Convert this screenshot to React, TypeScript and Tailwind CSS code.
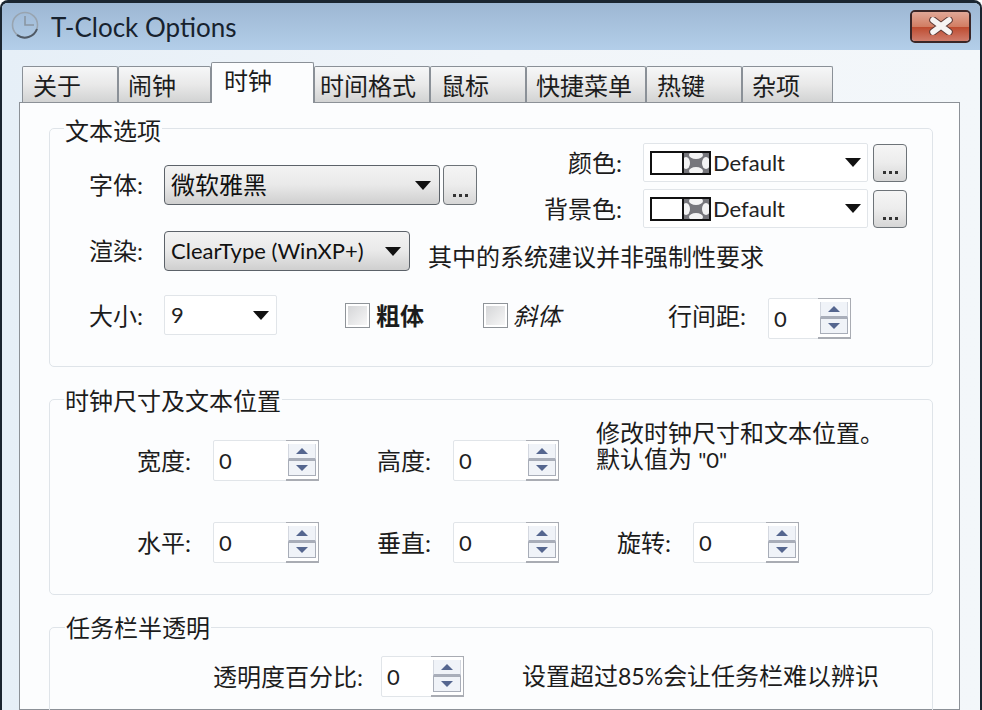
const base = "font-['Lato','Noto_Sans_CJK_SC',sans-serif]";

const tabs = [
  { label: '关于', width: 'w-[96px]', pad: 'pl-[10px]' },
  { label: '闹钟', width: 'w-[93px]', pad: 'pl-[9px]' },
  { label: '时钟', width: 'w-[103px]', pad: 'pl-[12px]', active: true },
  { label: '时间格式', width: 'w-[116px]', pad: 'pl-[5px]' },
  { label: '鼠标', width: 'w-[96px]', pad: 'pl-[10px]' },
  { label: '快捷菜单', width: 'w-[120px]', pad: 'pl-[9px]' },
  { label: '热键', width: 'w-[96px]', pad: 'pl-[10px]' },
  { label: '杂项', width: 'w-[91px]', pad: 'pl-[9px]' },
];

function Arrow({ className }: { className?: string }) {
  return (
    <svg width="16" height="9" viewBox="0 0 16 9" className={className}>
      <polygon points="0,0 16,0 8,9" fill="#111" />
    </svg>
  );
}

function ClockIcon() {
  return (
    <svg width="30" height="32" viewBox="0 0 30 32" className="shrink-0">
      <circle cx="15" cy="16" r="12.5" fill="none" stroke="#98a4b0" strokeWidth="1.6" />
      <path d="M7 26 A13 13 0 0 0 27 20" fill="none" stroke="#4f5a66" strokeWidth="2" />
      <path d="M15 7 V16 H24" fill="none" stroke="#8a96a2" strokeWidth="1.6" />
    </svg>
  );
}

function Swatch() {
  return (
    <svg width="61" height="24" viewBox="0 0 61 24" className="shrink-0">
      <rect x="1" y="1" width="59" height="22" fill="#fff" stroke="#111" strokeWidth="2" />
      <rect x="33" y="2" width="26" height="20" fill="#77777c" />
      <ellipse cx="46" cy="4" rx="7" ry="4" fill="#f4f4f4" />
      <ellipse cx="46" cy="20" rx="7" ry="4" fill="#f4f4f4" />
      <ellipse cx="36" cy="12" rx="4" ry="6" fill="#f4f4f4" />
      <ellipse cx="56" cy="12" rx="4" ry="6" fill="#f4f4f4" />
      <rect x="1" y="1" width="59" height="22" fill="none" stroke="#111" strokeWidth="2" />
      <path d="M33 0 V24" stroke="#111" strokeWidth="2" />
    </svg>
  );
}

function AeroSelect({ text, width, textSize }: { text: string; width: string; textSize: string }) {
  return (
    <div
      className={`${width} ${textSize} h-[40px] shrink-0 flex items-center justify-between pl-[6px] pr-[8px] rounded-[4px] border border-[#5c6269] bg-gradient-to-b from-[#f3f3f3] via-[#e9e9e9] to-[#cfcfcf] text-[#111] leading-none`}
    >
      <span className="whitespace-nowrap">{text}</span>
      <Arrow />
    </div>
  );
}

function PlainSelect({ children, width, className = '' }: { children: React.ReactNode; width: string; className?: string }) {
  return (
    <div
      className={`${width} h-[39px] shrink-0 flex items-center justify-between pl-[6px] pr-[6px] rounded-[2px] border border-[#e1e5e9] bg-white text-[#222] text-[22px] leading-none ${className}`}
    >
      {children}
    </div>
  );
}

function DotsButton({ className = '' }: { className?: string }) {
  return (
    <div
      className={`w-[34px] h-[38px] shrink-0 flex items-end justify-center pb-[7px] rounded-[4px] border border-[#6d7378] bg-gradient-to-b from-[#f5f5f5] via-[#ececec] to-[#d6d6d6] ${className}`}
    >
      <span className="flex gap-[3px]">
        <i className="w-[3px] h-[3px] bg-[#333]" />
        <i className="w-[3px] h-[3px] bg-[#333]" />
        <i className="w-[3px] h-[3px] bg-[#333]" />
      </span>
    </div>
  );
}

function SpinButton({ up }: { up?: boolean }) {
  return (
    <div
      className={`w-[28px] h-[16px] flex items-center justify-center bg-[#f0f3f8] ${up ? 'border-x border-x-[#d4d8e0] border-b-2 border-b-[#a9aeba]' : 'border border-[#a8adb8]'}`}
    >
      <svg width="12" height="6" viewBox="0 0 12 6">
        <polygon points={up ? '0,6 12,6 6,0' : '0,0 12,0 6,6'} fill="#55668f" />
      </svg>
    </div>
  );
}

function Spin({ width, className = '' }: { width: string; className?: string }) {
  return (
    <div className={`${width} h-[41px] shrink-0 flex justify-between rounded-[2px] border border-[#e1e5e9] bg-white ${className}`}>
      <span className="pl-[5px] self-center text-[22px] leading-none text-[#222]">0</span>
      <div className="w-[33px] flex flex-col justify-between py-[3px] pl-[2px] pr-[2px] border-r border-b-2 border-t border-[#a9acb3] -mr-[1px] -mt-[1px] -mb-[1px]">
        <SpinButton up />
        <SpinButton />
      </div>
    </div>
  );
}

function Check({ className = '' }: { className?: string }) {
  return (
    <div className={`w-[25px] h-[25px] shrink-0 border border-[#8f9499] bg-white p-[2px] ${className}`}>
      <div className="w-full h-full bg-gradient-to-br from-[#d5d6d8] to-[#f7f7f7]" />
    </div>
  );
}

function Group({ title, height, legend, children }: { title: string; height: string; legend: string; children: React.ReactNode }) {
  return (
    <div className={`relative ${height} shrink-0 rounded-[5px] border border-[#dfe4e9]`}>
      <span className={`absolute ${legend} px-[1px] bg-[#fcfdfe] text-[24px] leading-[32px] text-[#1c1c1c]`}>{title}</span>
      {children}
    </div>
  );
}

export default function App() {
  return (
    <div className={`${base} w-[982px] h-[710px] overflow-hidden flex flex-col bg-[#eef4f9] text-[24px] text-[#1c1c1c] border-x-[2px] border-t-[3px] border-[#1a2530] rounded-t-[8px]`}>
      {/* title bar */}
      <div className="h-[47px] shrink-0 flex items-start bg-gradient-to-b from-[#9db7d3] to-[#b3cee9] pl-[8px] pr-[9px]">
        <div className="mt-[6px]">
          <ClockIcon />
        </div>
        <span className="ml-[11px] mt-[6px] text-[#17222e] text-[26px] leading-[36px] whitespace-nowrap">T-Clock Options</span>
        <div className="ml-auto mt-[7px] w-[61px] h-[33px] rounded-[5px] border-2 border-[#3a2627] flex flex-col relative overflow-hidden">
          <div className="h-1/2 bg-gradient-to-b from-[#e0a796] to-[#d17c62]" />
          <div className="h-1/2 bg-gradient-to-b from-[#bd4a2e] to-[#cf7c6b]" />
          <svg width="26" height="18" viewBox="0 0 26 18" className="absolute left-[16px] top-[5px]">
            <path d="M5 3 L21 15 M21 3 L5 15" stroke="#5d3a36" strokeWidth="7.5" strokeLinecap="round" />
            <path d="M5 3 L21 15 M21 3 L5 15" stroke="#f7f4f3" strokeWidth="5.5" strokeLinecap="round" />
          </svg>
        </div>
      </div>

      {/* body */}
      <div className="flex-1 min-h-0 flex flex-col pl-[17px] pr-[20px] bg-gradient-to-r from-[#e6eff7] via-[#f1f5f9] to-[#f3f7fa]">
        {/* tabs */}
        <div className="h-[40px] mt-[12px] shrink-0 flex items-end pl-[3px] relative z-10">
          {tabs.map((tab) =>
            tab.active ? (
              <div
                key={tab.label}
                className={`${tab.width} ${tab.pad} h-[41px] -mb-[1px] shrink-0 border border-b-0 border-[#8a9097] rounded-t-[2px] bg-[#fcfdfe] text-[24px] leading-[36px]`}
              >
                {tab.label}
              </div>
            ) : (
              <div
                key={tab.label}
                className={`${tab.width} ${tab.pad} h-[36px] shrink-0 border border-b-0 border-[#8a9097] rounded-t-[2px] bg-gradient-to-b from-[#f6f7f8] via-[#e9e9e9] to-[#d2d3d3] text-[24px] leading-[38px] whitespace-nowrap`}
              >
                {tab.label}
              </div>
            ),
          )}
        </div>

        {/* panel */}
        <div className="flex-1 min-h-0 flex flex-col gap-[32px] border border-[#8c9197] bg-[#fcfdfe] pt-[25px] pl-[29px] pr-[26px]">
          <Group title="文本选项" height="h-[239px]" legend="left-[14px] -top-[14px]">
            <div className="flex pt-[14px]">
              <div className="flex items-start pt-[22px] pl-[39px]">
                <span className="w-[56px] leading-[40px] whitespace-nowrap">字体:</span>
                <AeroSelect text="微软雅黑" width="w-[276px] ml-[19px]" textSize="text-[24px]" />
                <DotsButton className="ml-[3px] h-[40px]" />
              </div>
              <div className="flex flex-col gap-[7px] ml-[67px]">
                <div className="flex items-center">
                  <span className="w-[78px] text-right whitespace-nowrap">颜色:</span>
                  <PlainSelect width="w-[225px] ml-[21px]">
                    <span className="flex items-center gap-[2px]">
                      <Swatch />
                      <span>Default</span>
                    </span>
                    <Arrow />
                  </PlainSelect>
                  <DotsButton className="ml-[5px]" />
                </div>
                <div className="flex items-center">
                  <span className="w-[78px] text-right whitespace-nowrap">背景色:</span>
                  <PlainSelect width="w-[225px] ml-[21px]">
                    <span className="flex items-center gap-[2px]">
                      <Swatch />
                      <span>Default</span>
                    </span>
                    <Arrow />
                  </PlainSelect>
                  <DotsButton className="ml-[5px]" />
                </div>
              </div>
            </div>

            <div className="flex items-start h-[40px] mt-[3px] pl-[39px]">
              <span className="w-[56px] leading-[40px] whitespace-nowrap">渲染:</span>
              <AeroSelect text="ClearType (WinXP+)" width="w-[246px] ml-[19px]" textSize="text-[22px]" />
              <span className="ml-[18px] leading-[52px] whitespace-nowrap">其中的系统建议并非强制性要求</span>
            </div>

            <div className="flex items-start mt-[24px] pl-[39px]">
              <span className="w-[56px] leading-[42px] whitespace-nowrap">大小:</span>
              <PlainSelect width="w-[113px] ml-[19px] h-[40px]">
                <span>9</span>
                <Arrow className="mr-[1px]" />
              </PlainSelect>
              <Check className="ml-[68px] mt-[8px]" />
              <span className="ml-[6px] leading-[42px] font-bold whitespace-nowrap">粗体</span>
              <Check className="ml-[59px] mt-[8px]" />
              <span className="ml-[5px] leading-[42px] italic whitespace-nowrap">斜体</span>
              <span className="ml-[107px] leading-[42px] whitespace-nowrap">行间距:</span>
              <Spin width="w-[83px] ml-[22px] mt-[3px]" />
            </div>
          </Group>

          <Group title="时钟尺寸及文本位置" height="h-[196px]" legend="left-[14px] -top-[15px]">
            <div className="flex items-start pt-[40px] pl-[87px]">
              <span className="w-[56px] leading-[42px] whitespace-nowrap">宽度:</span>
              <Spin width="w-[106px] ml-[20px]" />
              <span className="w-[56px] ml-[58px] leading-[42px] whitespace-nowrap">高度:</span>
              <Spin width="w-[106px] ml-[20px]" />
              <p className="ml-[37px] -mt-[20px] text-[24px] leading-[26px] whitespace-nowrap">
                修改时钟尺寸和文本位置。
                <br />
                默认值为 <span className="text-[22px]">"0"</span>
              </p>
            </div>
            <div className="flex items-start mt-[40px] pl-[87px]">
              <span className="w-[56px] leading-[42px] whitespace-nowrap">水平:</span>
              <Spin width="w-[106px] ml-[20px]" />
              <span className="w-[56px] ml-[58px] leading-[42px] whitespace-nowrap">垂直:</span>
              <Spin width="w-[106px] ml-[20px]" />
              <span className="w-[56px] ml-[58px] leading-[42px] whitespace-nowrap">旋转:</span>
              <Spin width="w-[106px] ml-[20px]" />
            </div>
          </Group>

          <Group title="任务栏半透明" height="h-[120px]" legend="left-[15px] -top-[16px]">
            <div className="flex items-start pt-[28px] pl-[163px]">
              <span className="w-[150px] leading-[42px] whitespace-nowrap">透明度百分比:</span>
              <Spin width="w-[83px] ml-[18px]" />
              <span className="ml-[58px] leading-[40px] whitespace-nowrap">
                设置超过<span className="text-[23px]">85%</span>会让任务栏难以辨识
              </span>
            </div>
          </Group>
        </div>
      </div>
    </div>
  );
}
